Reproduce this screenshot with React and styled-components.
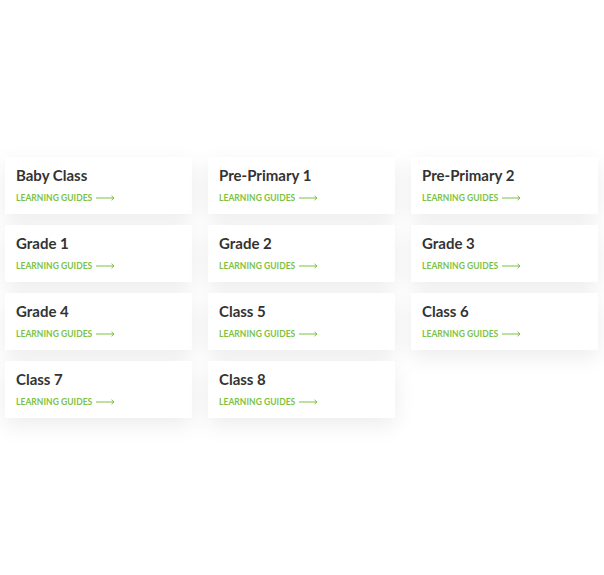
import React from "react";
import styled, { createGlobalStyle } from "styled-components";

const Global = createGlobalStyle`
  html, body { margin: 0; padding: 0; background: #fff; }
  body { font-family: "Lato", "Open Sans", sans-serif; }
`;

const Page = styled.div`
  width: 604px;
  height: 575px;
  padding: 157px 6px 0 5px;
  box-sizing: border-box;
`;

const Grid = styled.div`
  display: grid;
  grid-template-columns: repeat(3, 187px);
  column-gap: 16px;
  row-gap: 11px;
`;

const Card = styled.a`
  display: flex;
  flex-direction: column;
  height: 57px;
  box-sizing: border-box;
  padding: 9px 11px 0;
  background: #fff;
  box-shadow: 0 7px 22px rgba(0, 0, 0, 0.08);
  text-decoration: none;
`;

const Title = styled.div`
  font-family: "Lato", sans-serif;
  font-weight: 700;
  font-size: 15px;
  line-height: 18px;
  color: #333;
`;

const Link = styled.div`
  display: flex;
  align-items: center;
  gap: 4px;
  margin-top: 8px;
  font-family: "Lato", sans-serif;
  font-weight: 700;
  font-size: 8.5px;
  letter-spacing: 0.05px;
  color: #7cc242;
  line-height: 12px;
`;

const Arrow = () => (
  <svg width="19" height="6" viewBox="0 0 19 6" fill="none">
    <path d="M0 3H18M15.5 0.8L18 3L15.5 5.2" stroke="#7cc242" strokeWidth="1" />
  </svg>
);

const items = [
  "Baby Class",
  "Pre-Primary 1",
  "Pre-Primary 2",
  "Grade 1",
  "Grade 2",
  "Grade 3",
  "Grade 4",
  "Class 5",
  "Class 6",
  "Class 7",
  "Class 8",
];

export default function App() {
  return (
    <>
      <Global />
      <Page>
        <Grid>
          {items.map((t) => (
            <Card key={t}>
              <Title>{t}</Title>
              <Link>
                LEARNING GUIDES <Arrow />
              </Link>
            </Card>
          ))}
        </Grid>
      </Page>
    </>
  );
}
